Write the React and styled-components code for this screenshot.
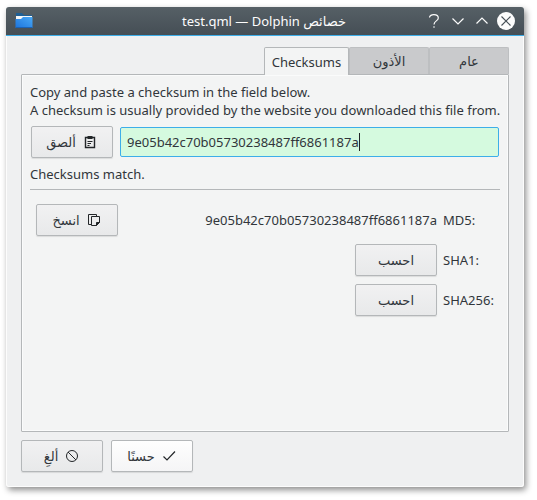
import React, { useState } from "react";
import styled, { createGlobalStyle } from "styled-components";

const MD5 = "9e05b42c70b05730238487ff6861187a";

const App = () => {
  const [checksum, setChecksum] = useState(MD5);

  return (
    <>
      <GlobalStyle />
      <Dialog dir="rtl">
        <TitleBar>
          <WindowButtons>
            <CloseButton aria-label="إغلاق">
              <svg width="18" height="18" viewBox="0 0 18 18">
                <circle cx="9" cy="9" r="9" fill="#fcfcfc" />
                <path d="M4.5 4.5l9 9M13.5 4.5l-9 9" stroke="#475057" strokeWidth="1.1" />
              </svg>
            </CloseButton>
            <WindowButton aria-label="تكبير">
              <svg width="18" height="18" viewBox="0 0 18 18">
                <path d="M3.5 11.5L9 6l5.5 5.5" />
              </svg>
            </WindowButton>
            <WindowButton aria-label="تصغير">
              <svg width="18" height="18" viewBox="0 0 18 18">
                <path d="M3.5 6.5L9 12l5.5-5.5" />
              </svg>
            </WindowButton>
            <WindowButton aria-label="مساعدة">
              <svg width="18" height="18" viewBox="0 0 18 18">
                <path d="M4.5 5.5C4.5 1.7 13.3 1.7 13.3 6c0 3-4.3 2.8-4.3 6.5M9 14.2v1.6" />
              </svg>
            </WindowButton>
          </WindowButtons>
          <Title>خصائص test.qml — Dolphin</Title>
          <FolderIcon width="18" height="16" viewBox="0 0 18 16">
            <defs>
              <linearGradient id="folder" x1="0" y1="1" x2="1" y2="0">
                <stop offset="0" stopColor="#1d74dc" />
                <stop offset="1" stopColor="#48a8f5" />
              </linearGradient>
            </defs>
            <path d="M1 0h6l2 2h8v7H1z" fill="#1f5f94" />
            <path d="M1 3h16v5H1z" fill="#f4f6f7" />
            <path d="M0.5 6H6l2-2h9.500v11h-17z" fill="url(#folder)" />
            <path d="M0.5 14.5h17" stroke="#1a62b5" />
          </FolderIcon>
        </TitleBar>

        <Body>
          <Tabs role="tablist">
            <Tab role="tab">عام</Tab>
            <Tab role="tab">الأذون</Tab>
            <Tab role="tab" aria-selected="true" $active>
              Checksums
            </Tab>
          </Tabs>

          <Panel role="tabpanel">
            <Text>
              <label htmlFor="checksum">Copy and paste a checksum in the field below.</label>
            </Text>
            <Text>A checksum is usually provided by the website you downloaded this file from.</Text>
            <PasteRow>
              <Field>
                <Input
                  id="checksum"
                  type="text"
                  value={checksum}
                  onChange={(e) => setChecksum(e.target.value)}
                />
                <Caret />
              </Field>
              <Button type="button">
                <svg width="16" height="16" viewBox="0 0 16 16">
                  <path d="M3.5 3.5h9v10h-9z" strokeWidth="1.4" />
                  <path d="M5.5 3.5h5" strokeWidth="3" />
                  <path d="M5.5 7.5h5M5.5 9.5h3.5M5.5 11.5h2" />
                </svg>
                ألصق
              </Button>
            </PasteRow>
            <Text>Checksums match.</Text>
            <Separator />

            <Sums>
              <SumRow>
                <SumLabel htmlFor="md5">MD5:</SumLabel>
                <Sum id="md5">{MD5}</Sum>
                <Button type="button">
                  <svg width="16" height="16" viewBox="0 0 16 16">
                    <path d="M5 12.5H2.5v-10h8V4" />
                    <path d="M5.5 4.5h8v6l-3 3h-5z" />
                    <path d="M10.5 13.5v-3h3z" fill="#232629" />
                  </svg>
                  انسخ
                </Button>
              </SumRow>
              <SumRow>
                <SumLabel htmlFor="sha1">SHA1:</SumLabel>
                <Button id="sha1" type="button">احسب</Button>
              </SumRow>
              <SumRow>
                <SumLabel htmlFor="sha256">SHA256:</SumLabel>
                <Button id="sha256" type="button">احسب</Button>
              </SumRow>
            </Sums>
          </Panel>

          <Actions>
            <Button type="button" $primary>
              <svg width="16" height="16" viewBox="0 0 16 16">
                <path d="M2.5 8.5L6 12l8-8.5" strokeWidth="1.2" />
              </svg>
              حسنًا
            </Button>
            <Button type="button">
              <svg width="16" height="16" viewBox="0 0 16 16">
                <circle cx="8" cy="8" r="5.5" />
                <path d="M4 4l8 8" />
              </svg>
              ألغِ
            </Button>
          </Actions>
        </Body>
      </Dialog>
    </>
  );
};

export default App;

const GlobalStyle = createGlobalStyle`
  * {
    box-sizing: border-box;
  }
  body {
    margin: 0;
    background: #ffffff;
    color: #31363b;
    font-family: "Noto Sans", "DejaVu Sans", sans-serif;
    font-size: 13px;
    line-height: 18px;
  }
  button, input {
    font: inherit;
    color: inherit;
  }
`;

const Dialog = styled.main`
  display: flex;
  flex-direction: column;
  min-height: calc(100vh - 20px);
  margin: 7px 13px 13px 6px;
  border-radius: 3px;
  background: #eff0f1;
  box-shadow: 2px 3px 6px rgba(0, 0, 0, 0.45);
`;

const TitleBar = styled.header`
  display: flex;
  align-items: center;
  height: 29px;
  padding: 0 9px;
  border-radius: 3px 3px 0 0;
  border-bottom: 1px solid #3daee9;
  background: linear-gradient(#566066, #454e55);
  color: #fcfcfc;
`;

const WindowButtons = styled.div`
  display: flex;
  gap: 6px;
`;

const WindowButton = styled.button`
  display: flex;
  padding: 0;
  border: 0;
  background: none;
  & svg {
    fill: none;
    stroke: #fcfcfc;
    stroke-width: 1.2;
  }
`;

const CloseButton = styled(WindowButton)`
  & svg {
    stroke: none;
  }
`;

const Title = styled.h1`
  flex: 1;
  margin: 0;
  padding-left: 70px;
  font-size: 13px;
  font-weight: normal;
  text-align: center;
`;

const FolderIcon = styled.svg`
  flex: none;
`;

const Body = styled.div`
  display: flex;
  flex: 1;
  flex-direction: column;
  padding: 11px 14px 14px;
  border: 1px solid #fcfcfc;
  border-top: 0;
  border-radius: 0 0 3px 3px;
`;

const Tabs = styled.div`
  display: flex;
  height: 27px;
`;

const Tab = styled.button`
  width: ${({ $active }) => ($active ? 85 : 80)}px;
  padding: 0;
  border: 1px solid ${({ $active }) => ($active ? "#b4b7b9" : "#bdbfc1")};
  border-bottom: 0;
  border-radius: 2px 2px 0 0;
  background: ${({ $active }) => ($active ? "#f3f4f4" : "#c9cacc")};
  ${({ $active }) => $active && "z-index: 1; margin-bottom: -1px;"}
`;

const Panel = styled.section`
  display: flex;
  flex: 1;
  flex-direction: column;
  padding: 8px;
  border: 1px solid #b4b7b9;
  border-radius: 1px;
  background: #f3f4f4;
  box-shadow: inset 0 0 0 1px #fafbfb;
`;

const Text = styled.p`
  direction: ltr;
  margin: 0;
  text-align: left;
  white-space: nowrap;
`;

const PasteRow = styled.div`
  display: flex;
  gap: 7px;
  align-items: center;
  margin: 7px 0;
  padding: 0 1px;
`;

const Field = styled.div`
  direction: ltr;
  display: flex;
  flex: 1;
  align-items: center;
  min-width: 0;
  height: 30px;
  padding: 0 6px;
  border: 1px solid #3daee9;
  border-radius: 2px;
  background: #d5fadf;
`;

const Input = styled.input`
  field-sizing: content;
  min-width: 0;
  padding: 0;
  border: 0;
  outline: 0;
  background: none;
`;

const Caret = styled.span`
  width: 1px;
  height: 18px;
  background: #232629;
`;

const Button = styled.button`
  display: flex;
  flex: none;
  gap: 6px;
  align-items: center;
  justify-content: center;
  width: 82px;
  height: 32px;
  padding: 0;
  border: 1px solid #b4b7b9;
  border-radius: 2px;
  background: ${({ $primary }) => ($primary ? "linear-gradient(#fefefe, #f5f5f6)" : "linear-gradient(#f1f1f2, #e8e9ea)")};
  box-shadow: 0 1px 1px rgba(0, 0, 0, 0.1);
  & svg {
    fill: none;
    stroke: #232629;
  }
`;

const Separator = styled.hr`
  width: 100%;
  height: 1px;
  margin: 6px 0 14px;
  border: 0;
  background: #b4b7b9;
`;

const Sums = styled.div`
  display: flex;
  flex-direction: column;
  gap: 8px;
  padding: 0 6px;
`;

const SumRow = styled.div`
  display: flex;
  gap: 6px;
  align-items: center;
  height: 32px;
`;

const SumLabel = styled.label`
  direction: ltr;
  width: 51px;
  text-align: left;
`;

const Sum = styled.output`
  direction: ltr;
  flex: 1;
  text-align: right;
`;

const Actions = styled.footer`
  display: flex;
  gap: 8px;
  justify-content: flex-end;
  padding-top: 8px;
`;
